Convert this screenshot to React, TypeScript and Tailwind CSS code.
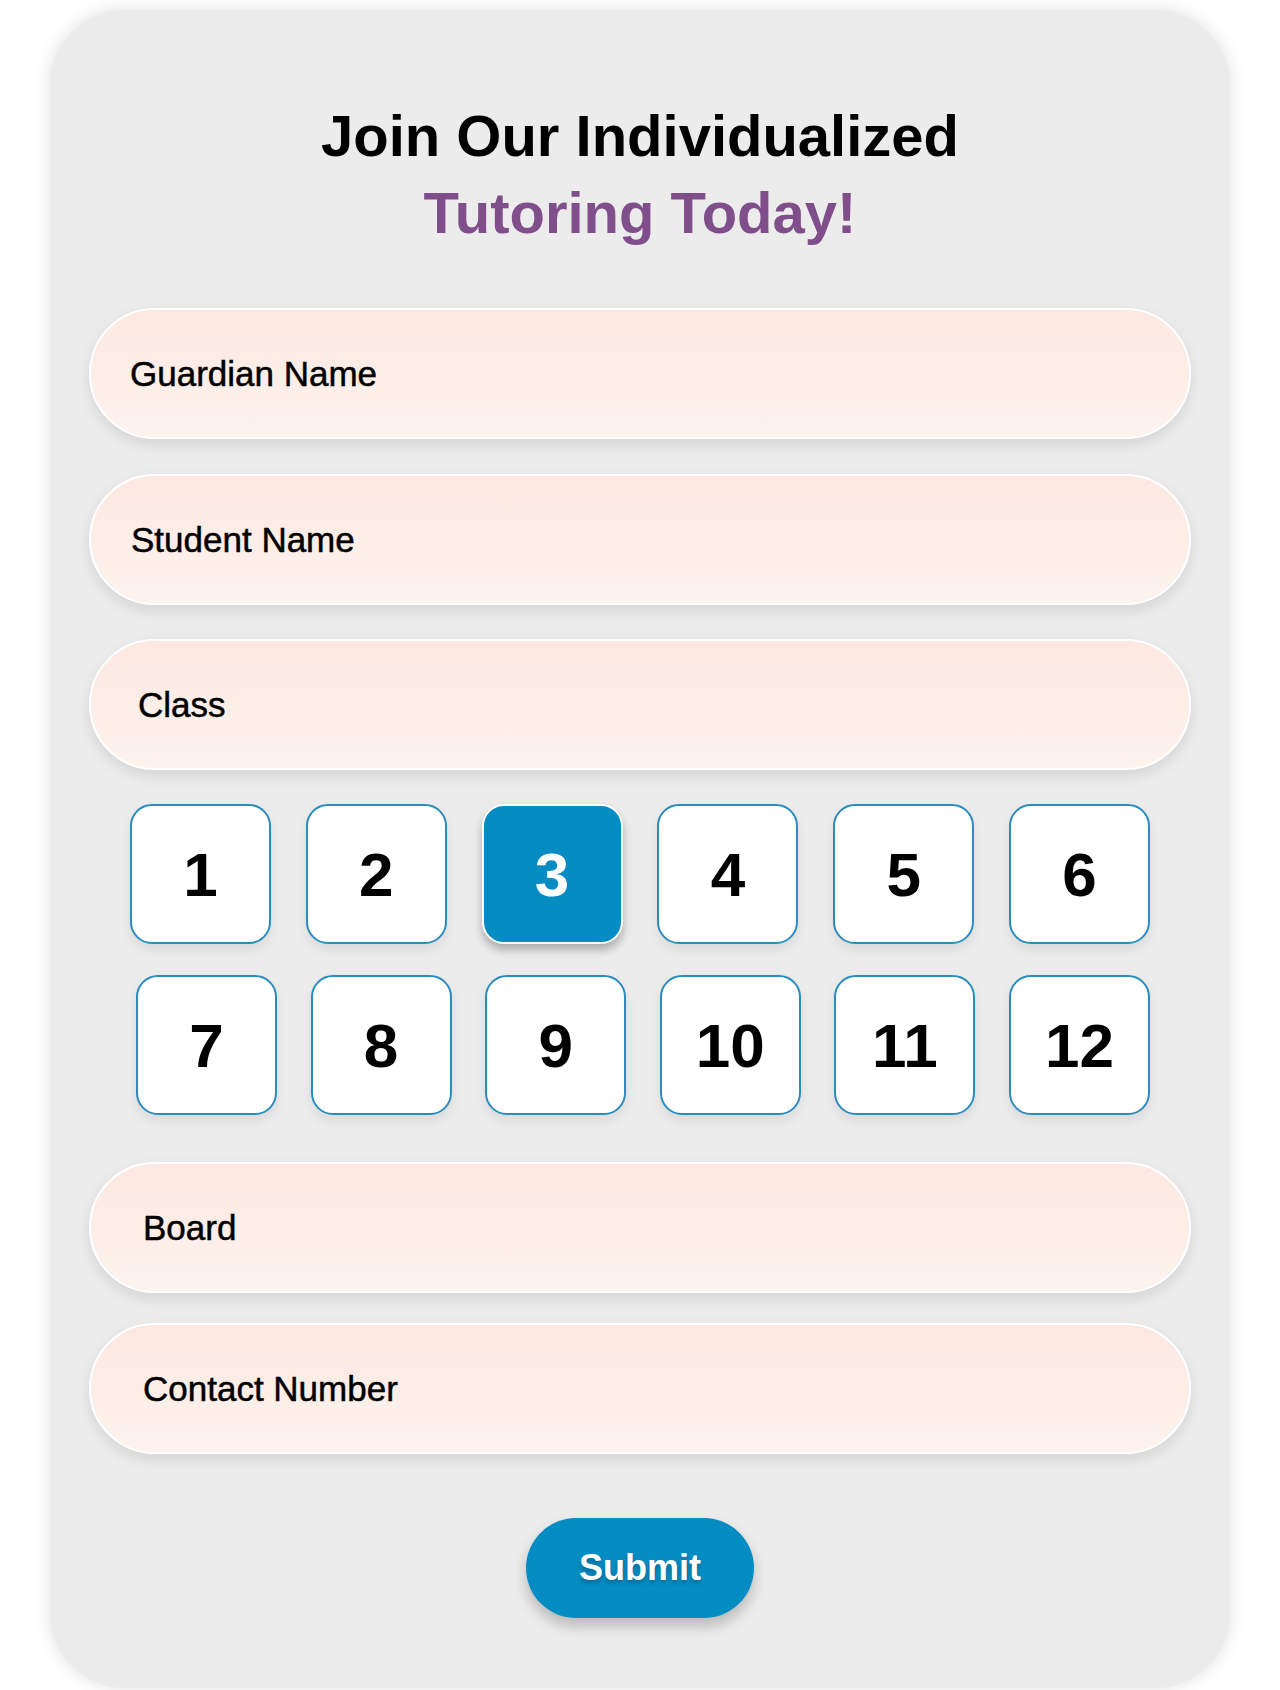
import React, { useState } from "react";

const font = { fontFamily: '"Liberation Sans", Arial, sans-serif' };

function Field({ placeholder, pad, className }: { placeholder: string; pad: string; className: string }) {
  return (
    <input
      type="text"
      placeholder={placeholder}
      className={`block h-[131px] w-full rounded-full border-2 border-white bg-gradient-to-b from-[#fce8e1] to-[#fdf3ed] text-[35px] text-black placeholder:text-black shadow-[0_6px_14px_rgba(0,0,0,0.10)] outline-none [-webkit-text-stroke:0.5px_#000] ${pad} ${className}`}
      style={font}
    />
  );
}

function NumBtn({ n, active, onClick }: { n: number; active: boolean; onClick: () => void }) {
  return (
    <button
      type="button"
      onClick={onClick}
      className={
        active
          ? "flex h-[140px] w-[141px] items-center justify-center rounded-[22px] border-2 border-white bg-[#058dc3] text-[62px] font-bold text-white shadow-[0_6px_10px_rgba(0,0,0,0.28)]"
          : "flex h-[140px] w-[141px] items-center justify-center rounded-[22px] border-2 border-[#2a8dbd] bg-white text-[62px] font-bold text-black shadow-[0_6px_12px_rgba(0,0,0,0.08)]"
      }
      style={font}
    >
      {n}
    </button>
  );
}

export default function App() {
  const [cls, setCls] = useState(3);
  return (
    <div className="min-h-[1690px] w-full bg-white pt-[10px]" style={font}>
      <div className="ml-[50px] h-[1678px] w-[1180px] rounded-[75px] bg-[#ececec] px-[39px] shadow-[0_0_18px_rgba(0,0,0,0.12)]">
        <h1 className="pt-[87px] text-center text-[58px] font-bold leading-[77px] text-black">
          Join Our Individualized
          <br />
          <span className="text-[#7f4e8b]">Tutoring Today!</span>
        </h1>

        <Field placeholder="Guardian Name" pad="pl-[39px]" className="mt-[57px]" />
        <Field placeholder="Student Name" pad="pl-[40px]" className="mt-[35px]" />
        <Field placeholder="Class" pad="pl-[47px]" className="mt-[34px]" />

        <div className="mt-[34px] flex justify-between pl-[41px] pr-[41px]">
          {[1, 2, 3, 4, 5, 6].map((n) => (
            <NumBtn key={n} n={n} active={cls === n} onClick={() => setCls(n)} />
          ))}
        </div>
        <div className="mt-[31px] flex justify-between pl-[47px] pr-[41px]">
          {[7, 8, 9, 10, 11, 12].map((n) => (
            <NumBtn key={n} n={n} active={cls === n} onClick={() => setCls(n)} />
          ))}
        </div>

        <Field placeholder="Board" pad="pl-[52px]" className="mt-[47px]" />
        <Field placeholder="Contact Number" pad="pl-[52px]" className="mt-[30px]" />

        <div className="mt-[64px] flex justify-center">
          <button
            type="button"
            className="h-[100px] w-[228px] rounded-full bg-[#058dc3] text-[36px] font-bold text-white shadow-[0_8px_14px_rgba(0,0,0,0.22)] [text-shadow:0_3px_4px_rgba(0,0,0,0.25)]"
            style={font}
          >
            Submit
          </button>
        </div>
      </div>
    </div>
  );
}
